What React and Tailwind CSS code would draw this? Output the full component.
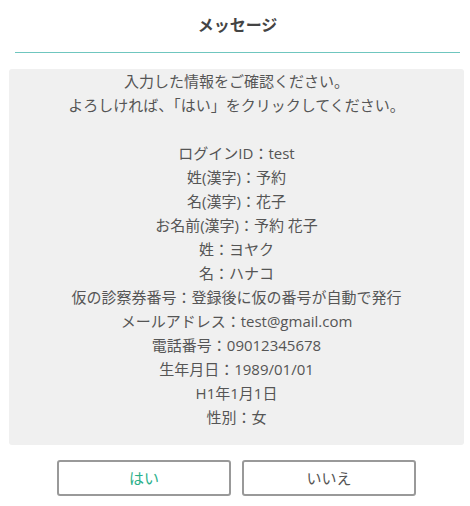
const LINES = [
  'ログインID：test',
  '姓(漢字)：予約',
  '名(漢字)：花子',
  'お名前(漢字)：予約 花子',
  '姓：ヨヤク',
  '名：ハナコ',
  '仮の診察券番号：登録後に仮の番号が自動で発行',
  'メールアドレス：test@gmail.com',
  '電話番号：09012345678',
  '生年月日：1989/01/01',
  'H1年1月1日',
  '性別：女',
];

export default function App() {
  return (
    <div
      className="w-[470px] h-[506px] bg-white text-[#555] text-[15px] leading-[24px]"
      style={{ fontFamily: '"Open Sans", "Noto Sans CJK JP", sans-serif' }}
    >
      {/* Header */}
      <div className="pt-[13px] pl-[15px] pr-[10px]">
        <h1 className="text-center font-bold text-[16px] leading-[24px] text-[#444]">メッセージ</h1>
        <div className="mt-[15px] h-px bg-[#6fc6bf]" />
      </div>

      {/* Confirmation body */}
      <div className="ml-[9px] mr-[6px] mt-[16px] pb-[16px] bg-[#f0f0f0] rounded-[3px] text-center">
        <p>入力した情報をご確認ください。</p>
        <p>よろしければ、「はい」をクリックしてください。</p>
        <div className="h-[24px]" />
        {LINES.map((line) => (
          <p key={line}>{line}</p>
        ))}
      </div>

      {/* Buttons */}
      <div className="mt-[15px] pl-[3px] flex justify-center gap-[11px]">
        <button className="w-[174px] h-[36px] border-2 border-[#999] rounded-[3px] bg-white text-[#2bb08a]">
          はい
        </button>
        <button className="w-[174px] h-[36px] border-2 border-[#999] rounded-[3px] bg-white text-[#555]">
          いいえ
        </button>
      </div>
    </div>
  );
}
